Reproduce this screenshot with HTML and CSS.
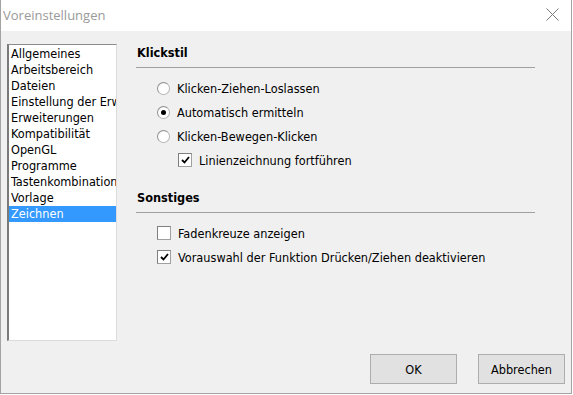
FILE: index.html
```html
<!DOCTYPE html>
<html lang="de">
<head>
    <meta charset="UTF-8">
    <title>Voreinstellungen</title>
    <link rel="stylesheet" href="styles.css">
</head>
<body>
    <div class="window">
        <!-- Title bar -->
        <div class="titlebar">
            <span class="title">Voreinstellungen</span>
            <svg class="close" width="13" height="13" viewBox="0 0 13 13">
                <path d="M0.5 0.5 L12.5 12.5 M12.5 0.5 L0.5 12.5" stroke="#7a7a7a" stroke-width="1" fill="none"/>
            </svg>
        </div>

        <div class="dialog">
            <div class="main">
                <!-- Category list -->
                <ul class="category-list">
                    <li>Allgemeines</li>
                    <li>Arbeitsbereich</li>
                    <li>Dateien</li>
                    <li>Einstellung der Erweiterungen</li>
                    <li>Erweiterungen</li>
                    <li>Kompatibilität</li>
                    <li>OpenGL</li>
                    <li>Programme</li>
                    <li>Tastenkombinationen</li>
                    <li>Vorlage</li>
                    <li class="selected">Zeichnen</li>
                </ul>

                <!-- Settings page -->
                <div class="page">
                    <section class="group">
                        <h2>Klickstil</h2>
                        <div class="options">
                            <div class="option"><span class="radio"></span>Klicken-Ziehen-Loslassen</div>
                            <div class="option"><span class="radio checked"></span>Automatisch ermitteln</div>
                            <div class="option"><span class="radio"></span>Klicken-Bewegen-Klicken</div>
                            <div class="option sub">
                                <span class="checkbox checked">
                                    <svg width="9" height="8" viewBox="0 0 9 8"><path d="M1 4 L3.5 6.5 L8 1" stroke="#000" stroke-width="1.8" fill="none"/></svg>
                                </span>Linienzeichnung fortführen
                            </div>
                        </div>
                    </section>

                    <section class="group">
                        <h2>Sonstiges</h2>
                        <div class="options">
                            <div class="option"><span class="checkbox"></span>Fadenkreuze anzeigen</div>
                            <div class="option">
                                <span class="checkbox checked">
                                    <svg width="9" height="8" viewBox="0 0 9 8"><path d="M1 4 L3.5 6.5 L8 1" stroke="#000" stroke-width="1.8" fill="none"/></svg>
                                </span>Vorauswahl der Funktion Drücken/Ziehen deaktivieren
                            </div>
                        </div>
                    </section>
                </div>
            </div>

            <!-- Dialog buttons -->
            <div class="buttons">
                <button class="btn">OK</button>
                <button class="btn">Abbrechen</button>
            </div>
        </div>
    </div>
</body>
</html>
```

FILE: styles.css
```css
/* General */
body {
    margin: 0;
    font-family: "DejaVu Sans Condensed", "DejaVu Sans", sans-serif;
    font-size: 12.6px;
    color: #000;
}

.window {
    width: 572px;
    height: 394px;
    box-sizing: border-box;
    border: 1px solid #a3a3a3;
    border-top: none;
    background: #f0f0f0;
    display: flex;
    flex-direction: column;
}

/* Title bar */
.titlebar {
    height: 31px;
    background: #fff;
    display: flex;
    align-items: center;
    justify-content: space-between;
    padding: 0 12px 2px 2px;
    box-sizing: border-box;
}

.title {
    font-family: "Open Sans", sans-serif;
    font-size: 13px;
    color: #9a9a9a;
}

/* Dialog body */
.dialog {
    flex: 1;
    display: flex;
    flex-direction: column;
}

.main {
    display: flex;
    gap: 19px;
    padding: 13px 0 0 6px;
}

/* Category list */
.category-list {
    list-style: none;
    margin: 0;
    padding: 1px 0 0 0;
    width: 110px;
    height: 297px;
    box-sizing: border-box;
    background: #fff;
    border: 1px solid #dcdcdc;
    border-left: 2px solid #7a7a7a;
    border-top-color: #8c8c8c;
    overflow: hidden;
}

.category-list li {
    height: 16px;
    line-height: 16px;
    padding-left: 2px;
    white-space: nowrap;
    overflow: hidden;
}

.category-list li.selected {
    background: #3399ff;
    color: #fff;
}

/* Settings page */
.page {
    width: 399px;
    padding-top: 1px;
}

.group h2 {
    margin: 0;
    font-size: 12.6px;
    font-weight: bold;
    line-height: 16px;
    padding: 0 0 6px 1px;
    border-bottom: 1px solid #a0a0a0;
}

.options {
    padding: 12px 0 0 21px;
    display: flex;
    flex-direction: column;
    gap: 8px;
}

.group + .group {
    margin-top: 22px;
}

.option {
    display: flex;
    align-items: center;
    height: 16px;
    white-space: nowrap;
}

.option.sub {
    padding-left: 21px;
}

/* Radio buttons */
.radio {
    width: 13px;
    height: 13px;
    box-sizing: border-box;
    border-radius: 50%;
    border: 1px solid #b4b4b4;
    border-top-color: #8f8f8f;
    border-left-color: #8f8f8f;
    background: radial-gradient(circle at 60% 60%, #fff 55%, #e6e6e6 100%);
    margin-right: 7px;
    display: flex;
    align-items: center;
    justify-content: center;
}

.radio.checked::after {
    content: "";
    width: 5px;
    height: 5px;
    border-radius: 50%;
    background: #000;
}

/* Checkboxes */
.checkbox {
    width: 14px;
    height: 14px;
    box-sizing: border-box;
    border: 1px solid #a0a0a0;
    border-top-color: #7f7f7f;
    border-left-color: #7f7f7f;
    background: #fff;
    margin-right: 7px;
    display: flex;
    align-items: center;
    justify-content: center;
}

/* Buttons */
.buttons {
    margin-top: auto;
    display: flex;
    justify-content: flex-end;
    gap: 21px;
    padding: 0 6px 9px 0;
}

.btn {
    width: 87px;
    height: 30px;
    font-family: "DejaVu Sans Condensed", "DejaVu Sans", sans-serif;
    font-size: 12.6px;
    color: #000;
    background: #e1e1e1;
    border: 1px solid #adadad;
    padding: 0;
}
```
